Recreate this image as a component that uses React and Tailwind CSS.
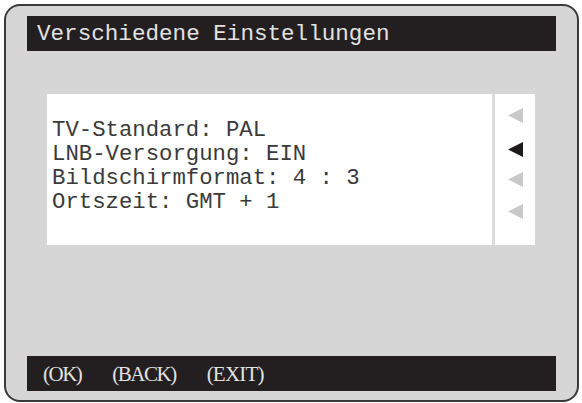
import React from "react";

function Arrow({ dark, className }) {
  return (
    <svg width="16" height="15" viewBox="0 0 16 15" className={className}>
      <polygon points="0,7.5 15,0 15,15" fill={dark ? "#1c1a1a" : "#c8c8c8"} />
    </svg>
  );
}

export default function App() {
  const mono = { fontFamily: '"Liberation Mono", "Courier New", monospace' };
  const serif = { fontFamily: '"Liberation Serif", "Times New Roman", serif' };
  return (
    <div className="w-[582px] h-[403px] bg-white overflow-hidden">
      <div className="ml-[4px] mt-[4px] w-[575px] h-[398px] border-2 border-[#3a3a3a] rounded-[16px] bg-[#d6d6d6] flex flex-col px-[21px] pt-[10px] pb-[9px]">
        <div className="h-[35px] bg-[#231f20] flex items-center pl-[10px] pt-[1px]">
          <span className="text-[22.6px] text-[#e2e2e2] leading-none whitespace-nowrap" style={mono}>
            Verschiedene Einstellungen
          </span>
        </div>
        <div className="mt-[43px] ml-[20px] flex h-[151px]">
          <div className="w-[445px] bg-white pt-[24px] pl-[5px]">
            {["TV-Standard: PAL", "LNB-Versorgung: EIN", "Bildschirmformat: 4 : 3", "Ortszeit: GMT + 1"].map((t) => (
              <div key={t} className="text-[22.3px] leading-[24px] text-[#3a3a3a] whitespace-pre" style={mono}>
                {t}
              </div>
            ))}
          </div>
          <div className="w-[3px] bg-[#dcdcdc]" />
          <div className="w-[40px] bg-white flex flex-col pl-[13px] pt-[14px]">
            <Arrow />
            <Arrow dark className="mt-[19px]" />
            <Arrow className="mt-[15px]" />
            <Arrow className="mt-[17px]" />
          </div>
        </div>
        <div className="flex-1" />
        <div className="h-[35px] bg-[#231f20] flex items-center pl-[16px] gap-[31px] pt-[1px]">
          <span className="text-[21px] tracking-[-1.5px] text-[#e2e2e2] leading-none" style={serif}>(OK)</span>
          <span className="text-[21px] tracking-[-1.5px] text-[#e2e2e2] leading-none" style={serif}>(BACK)</span>
          <span className="text-[21px] tracking-[-0.8px] text-[#e2e2e2] leading-none" style={serif}>(EXIT)</span>
        </div>
      </div>
    </div>
  );
}
